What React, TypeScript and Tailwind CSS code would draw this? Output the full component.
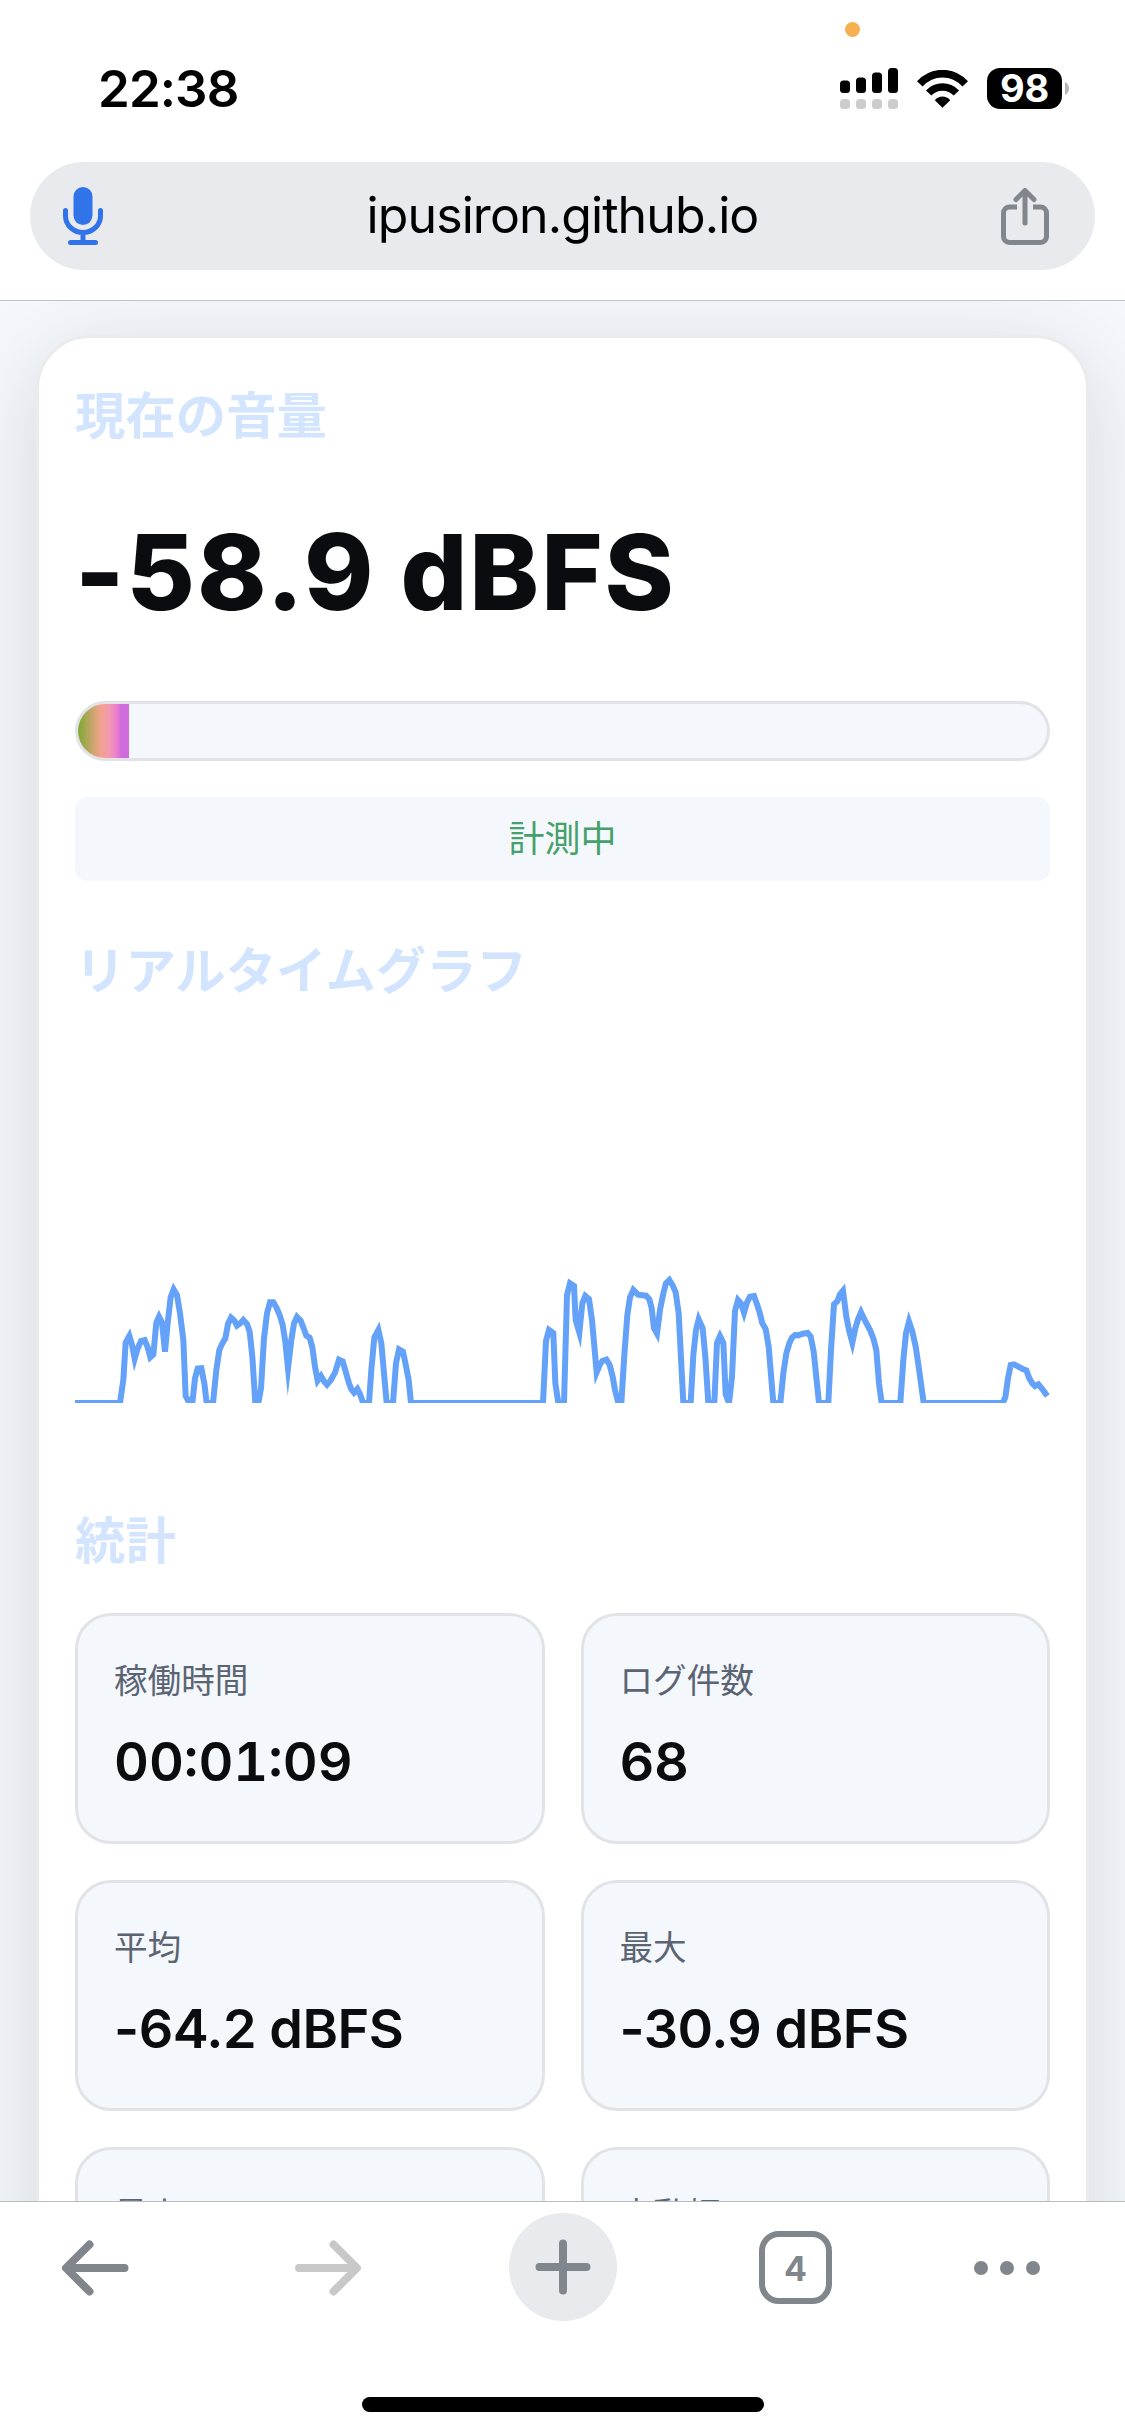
const points: [number, number][] = [
  [0, 429], [135, 429], [145, 360], [152, 248], [163, 228], [171, 255], [179, 296], [187, 268], [198, 243], [209, 240],
  [218, 262], [226, 292], [235, 284], [244, 188], [252, 170], [261, 188], [270, 275], [278, 190], [287, 112], [296, 88],
  [306, 105], [315, 160], [325, 240], [332, 408], [343, 429], [352, 429], [360, 355], [368, 326], [379, 325], [388, 370],
  [395, 429], [414, 429], [424, 330], [433, 270], [442, 250], [451, 235], [459, 192], [468, 173], [478, 182], [486, 197],
  [496, 190], [505, 180], [516, 192], [524, 215], [532, 290], [541, 429], [550, 429], [558, 385], [567, 235], [576, 160],
  [585, 127], [595, 127], [605, 144], [614, 165], [623, 195], [631, 245], [639, 325], [649, 240], [657, 190], [666, 171],
  [677, 182], [686, 205], [694, 227], [704, 233], [712, 262], [720, 320], [728, 362], [738, 348], [748, 365], [756, 374],
  [767, 361], [780, 338], [792, 299], [803, 304], [813, 338], [822, 370], [829, 388], [837, 398], [847, 387], [855, 402],
  [863, 425], [867, 429], [882, 429], [889, 330], [898, 232], [910, 210], [919, 250], [927, 340], [935, 429], [954, 429],
  [963, 310], [972, 268], [984, 275], [993, 318], [1001, 360], [1008, 429], [1404, 429], [1413, 243], [1422, 210],
  [1435, 219], [1441, 370], [1450, 429], [1467, 429], [1476, 105], [1485, 70], [1497, 78], [1502, 180], [1513, 218],
  [1522, 130], [1531, 108], [1542, 117], [1551, 180], [1565, 337], [1575, 313], [1582, 303], [1594, 299], [1604, 315],
  [1613, 350], [1620, 390], [1630, 429], [1639, 429], [1648, 285], [1657, 165], [1665, 112], [1675, 90], [1689, 104],
  [1713, 107], [1723, 118], [1730, 145], [1737, 205], [1746, 221], [1755, 150], [1765, 100], [1773, 70], [1783, 60],
  [1793, 76], [1802, 97], [1811, 160], [1825, 429], [1847, 429], [1855, 285], [1863, 210], [1871, 178], [1883, 205],
  [1891, 290], [1900, 429], [1918, 429], [1926, 248], [1935, 228], [1945, 248], [1952, 403], [1962, 429], [1971, 350],
  [1980, 153], [1989, 120], [1998, 130], [2007, 158], [2016, 127], [2025, 110], [2037, 108], [2045, 130], [2054, 158],
  [2062, 190], [2072, 207], [2081, 260], [2095, 429], [2116, 429], [2125, 340], [2134, 280], [2143, 250], [2151, 233],
  [2160, 225], [2170, 226], [2183, 221], [2198, 219], [2207, 230], [2216, 275], [2232, 429], [2260, 429], [2268, 270],
  [2277, 133], [2287, 124], [2295, 103], [2304, 92], [2314, 170], [2323, 215], [2332, 248], [2341, 205], [2349, 178],
  [2358, 157], [2369, 180], [2385, 210], [2395, 235], [2404, 270], [2412, 370], [2420, 429], [2476, 429], [2485, 300],
  [2493, 220], [2502, 185], [2512, 215], [2522, 260], [2531, 320], [2546, 429], [2783, 429], [2791, 412], [2799, 355],
  [2807, 315], [2817, 313], [2830, 320], [2843, 327], [2854, 331], [2863, 355], [2872, 370], [2880, 378], [2890, 373],
  [2900, 385], [2917, 408],
];

const stats = [
  { label: "稼働時間", value: "00:01:09", numeric: "tabular-nums" },
  { label: "ログ件数", value: "68", numeric: "tabular-nums tracking-[-0.4px]" },
  { label: "平均", value: "-64.2 dBFS", numeric: "tracking-[-0.5px] [font-feature-settings:'calt'_0]" },
  { label: "最大", value: "-30.9 dBFS", numeric: "tracking-[-0.5px] [font-feature-settings:'calt'_0]" },
  { label: "最小" },
  { label: "変動幅" },
];

function SectionTitle({ children }: { children: string }) {
  return <h2 className="h-[82px] text-[50.4px] font-bold leading-[84px] text-[#d3e5fe]">{children}</h2>;
}

function StatusBar() {
  return (
    <div className="relative flex h-[162px] items-start justify-between pt-[68px] pr-[56px] pl-[98px]">
      <span className="absolute top-[22px] left-[845px] size-[15px] rounded-full bg-[#f5b04f]" />
      <span className="-mt-[9px] text-[51px] font-semibold leading-[60px] tracking-[-0.9px] text-black">22:38</span>
      <div className="flex h-[41px]">
        <svg width="58" height="41" viewBox="0 0 58 41">
          {[12.5, 15.5, 20.5, 25].map((h, i) => (
            <g key={h}>
              <rect x={i * 16} y={25 - h} width="10" height={h} rx="3.5" />
              <rect x={i * 16} y="31" width="10" height="10" rx="3.5" fill="#ccc" />
            </g>
          ))}
        </svg>
        <svg className="mt-[2px] ml-[19px]" width="51" height="38" viewBox="0 0 51 38" fill="none">
          <path d="M2.8 13.8C15.5 .2 35.5 .2 48.2 13.8" stroke="#000" strokeWidth="7.6" />
          <path d="M11.6 23C19.5 15 31.5 15 39.4 23" stroke="#000" strokeWidth="7.4" />
          <path d="M17.8 30.3C22 25.3 29 25.3 33.2 30.3L25.5 37.8Z" fill="#000" />
        </svg>
        <div className="ml-[19px] flex h-[41px] w-[75px] items-center justify-center rounded-[13px] bg-black text-[38px] font-bold leading-[41px] tracking-[-0.2px] text-white">
          98
        </div>
        <svg className="mt-[14px] ml-[3px]" width="4" height="13" viewBox="0 0 4 13">
          <path d="M0 0C5.3 2.5 5.3 10.5 0 13Z" fill="#b5b5b5" />
        </svg>
      </div>
    </div>
  );
}

function AddressBar() {
  return (
    <div className="mx-[30px] flex h-[108px] items-center rounded-full bg-[#e8eaed] pr-[46px] pl-[33px]">
      <svg width="40" height="58" viewBox="0 0 40 58" fill="none" stroke="#3174ea" strokeWidth="5" strokeLinecap="round">
        <rect x="10.5" y="0" width="19" height="38" rx="9.5" fill="#3174ea" stroke="none" />
        <path d="M2.5 23.5v5.5a17.5 16.5 0 0 0 35 0v-5.5M20 46v9M7.5 55.5h25" />
      </svg>
      <span className="mb-[3px] flex-1 pl-[21px] text-center text-[50px] leading-[60px] tracking-[-0.9px] text-black">ipusiron.github.io</span>
      <svg width="48" height="57" viewBox="0 0 48 57" fill="none" stroke="#80868b" strokeWidth="5" strokeLinecap="round">
        <path d="M16 19H8.5a6 6 0 0 0-6 6v23.5a6 6 0 0 0 6 6h31a6 6 0 0 0 6-6V25a6 6 0 0 0-6-6H32" strokeLinecap="butt" />
        <path d="M24 35V3.5M15 11.5l9-9 9 9" strokeLinejoin="round" />
      </svg>
    </div>
  );
}

function Toolbar() {
  return (
    <footer className="relative h-[235px] shrink-0 border-t border-[#babbbe] bg-white">
      <div className="flex h-[131px] items-center pl-[61px]">
        <svg width="68" height="56" viewBox="0 0 68 56" fill="none" stroke="#80868b" strokeWidth="8" strokeLinecap="round" strokeLinejoin="round">
          <path d="M28.5 4.5L5 28l23.5 23.5M6 28h57.5" />
        </svg>
        <svg className="ml-[165px]" width="68" height="56" viewBox="0 0 68 56" fill="none" stroke="#c8c8c8" strokeWidth="8" strokeLinecap="round" strokeLinejoin="round">
          <path d="M39.5 4.5L63 28 39.5 51.5M62 28H5" />
        </svg>
        <span className="mb-[2px] ml-[147px] flex size-[108px] items-center justify-center rounded-full bg-[#e8eaed]">
          <svg width="56" height="56" viewBox="0 0 56 56" stroke="#80868b" strokeWidth="8" strokeLinecap="round">
            <path d="M28 4.5v47M4.5 28h47" />
          </svg>
        </span>
        <span className="ml-[142px] flex size-[73px] items-center justify-center rounded-[20px] border-[6.5px] border-[#80868b] pt-[2px] text-[34px] font-bold leading-none text-[#80868b]">
          4
        </span>
        <span className="ml-[142px] flex gap-[12px]">
          <i className="size-[14px] rounded-full bg-[#80868b]" />
          <i className="size-[14px] rounded-full bg-[#80868b]" />
          <i className="size-[14px] rounded-full bg-[#80868b]" />
        </span>
      </div>
      <div className="mx-auto mt-[64px] h-[15px] w-[402px] rounded-full bg-black" />
    </footer>
  );
}

export default function App() {
  return (
    <div className="flex h-[2436px] w-[1125px] flex-col overflow-hidden bg-white font-['Inter','Noto_Sans_CJK_JP',sans-serif]">
      <header className="h-[301px] shrink-0 border-b border-[#c0c2c5] bg-white">
        <StatusBar />
        <AddressBar />
      </header>

      <main className="min-h-0 flex-1 overflow-hidden bg-[#f4f8fd] px-[36px] pt-[34px]">
        <section className="h-[2200px] rounded-[54px] border-[3px] border-[#ebebeb] bg-white p-[36px] shadow-[0_18px_90px_rgba(15,0,10,0.13)]">
          <SectionTitle>現在の音量</SectionTitle>
          <p className="mt-[31px] h-[171px] text-[105px] font-extrabold leading-[170px] tracking-[2px] text-[#0b0c0f] [font-feature-settings:'calt'_0]">-58.9 dBFS</p>
          <div className="mt-[43px] h-[60px] overflow-hidden rounded-full border-[3px] border-[#e1e3e6] bg-[#f4f8fd]">
            <div className="h-full w-[51px] bg-[linear-gradient(90deg,#7eaa34_0%,#f2a28c_44%,#f09bb0_61%,#ee80cc_74%,#cf6bda_85%)]" />
          </div>
          <div className="mt-[36px] flex h-[84px] items-center justify-center rounded-[12px] bg-[#f4f8fd] text-[36px] leading-[82px] text-[#45a06a]">
            計測中
          </div>

          <div className="mt-[48px]">
            <SectionTitle>リアルタイムグラフ</SectionTitle>
          </div>
          <svg className="mt-[32px] block h-[360px] w-full overflow-hidden" viewBox="0 -651 2925 1080">
            <polyline points={points.map((p) => p.join(",")).join(" ")} fill="none" stroke="#64a1f8" strokeWidth="18" strokeMiterlimit="10" />
          </svg>

          <div className="mt-[96px]">
            <SectionTitle>統計</SectionTitle>
          </div>
          <div className="mt-[32px] grid grid-cols-2 gap-[36px]">
            {stats.map((s) => (
              <div key={s.label} className="h-[231px] rounded-[36px] border-[3px] border-[#e1e3e6] bg-[#f4f8fd] px-[36px] pt-[40px]">
                <div className="h-[50px] text-[33.6px] leading-[50px] text-[#5b6472]">{s.label}</div>
                {s.value && (
                  <div className={`mt-[24px] h-[64px] text-[54px] font-semibold leading-[64px] text-[#0b0c0f] ${s.numeric}`}>{s.value}</div>
                )}
              </div>
            ))}
          </div>
        </section>
      </main>

      <Toolbar />
    </div>
  );
}
